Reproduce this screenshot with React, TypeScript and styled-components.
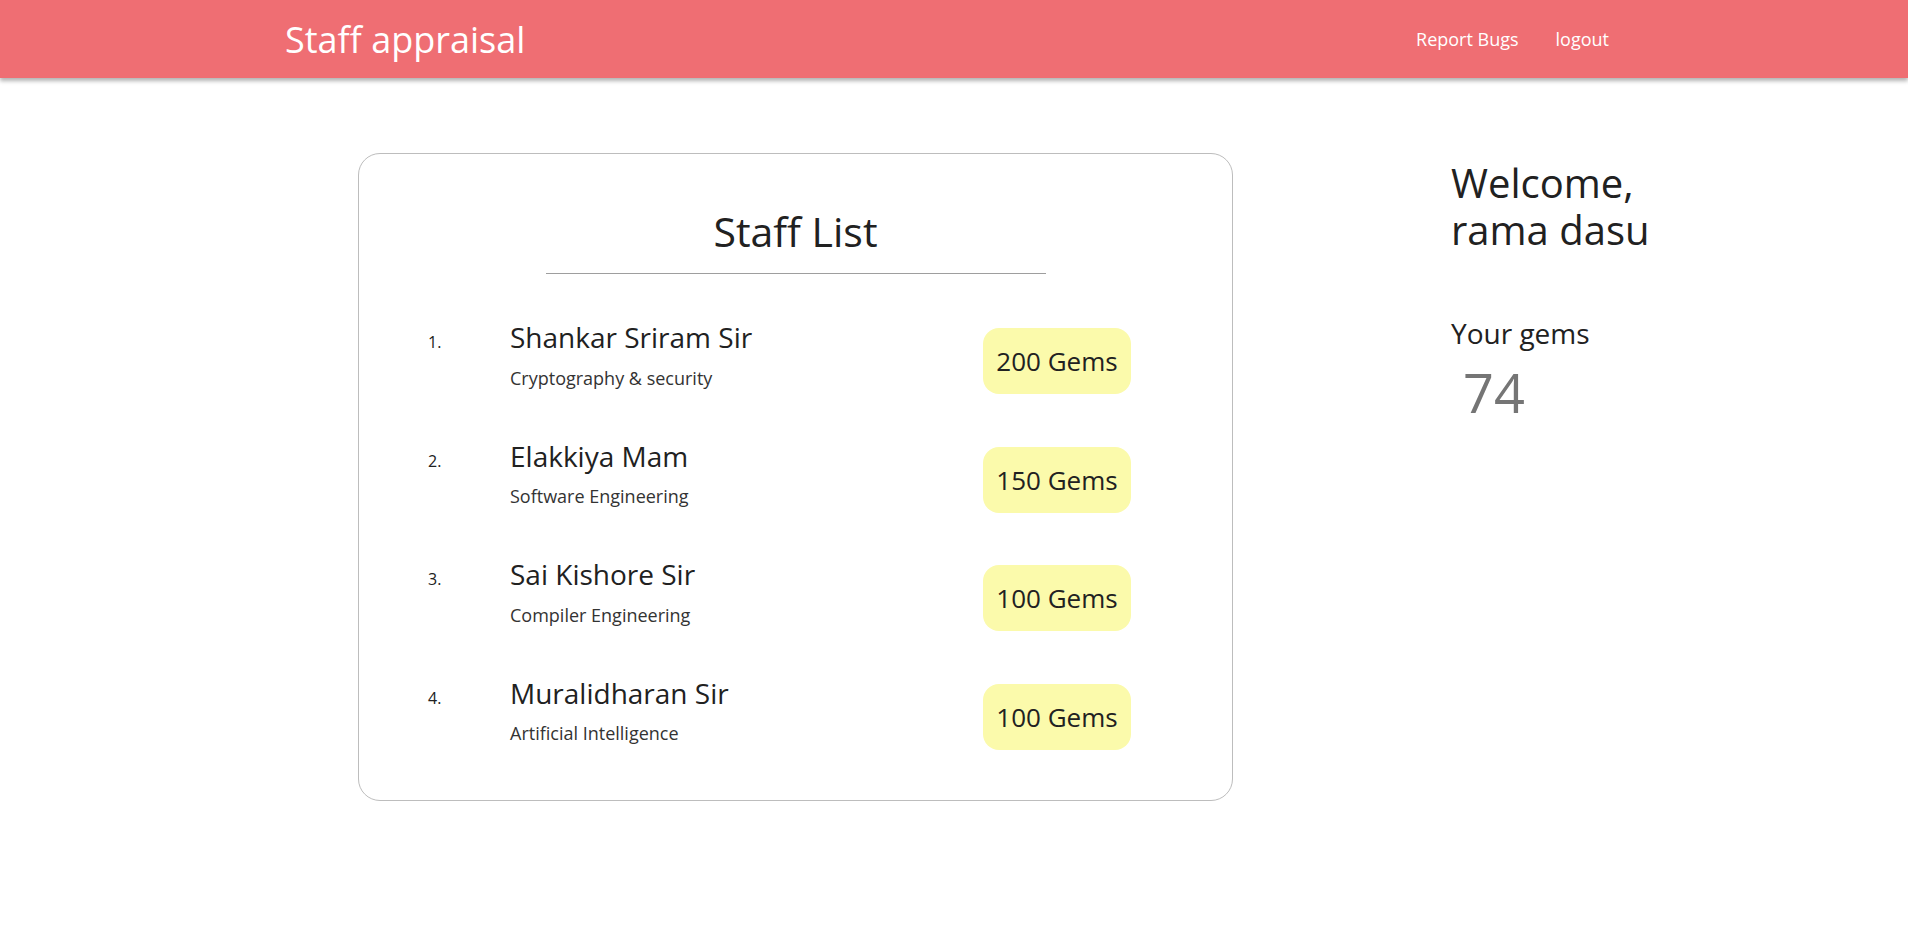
import { createGlobalStyle, styled } from 'styled-components';

const staff = [
  { name: 'Shankar Sriram Sir', subject: 'Cryptography & security', gems: 200 },
  { name: 'Elakkiya Mam', subject: 'Software Engineering', gems: 150 },
  { name: 'Sai Kishore Sir', subject: 'Compiler Engineering', gems: 100 },
  { name: 'Muralidharan Sir', subject: 'Artificial Intelligence', gems: 100 },
];

const GlobalStyle = createGlobalStyle`
  body {
    margin: 0;
    background: #fff;
    font-family: 'Open Sans', 'Noto Sans', sans-serif;
    color: #212121;
  }
`;

function App() {
  return (
    <>
      <GlobalStyle />
      <Navbar>
        <Brand>Staff appraisal</Brand>
        <NavLinks>
          <NavLink>Report Bugs</NavLink>
          <NavLink>logout</NavLink>
        </NavLinks>
      </Navbar>
      <Main>
        <Card>
          <CardTitle>Staff List</CardTitle>
          <StaffList>
            {staff.map((s, i) => (
              <StaffRow key={s.name}>
                <Index>{i + 1}.</Index>
                <Info>
                  <StaffName>{s.name}</StaffName>
                  <Subject>{s.subject}</Subject>
                </Info>
                <GemBadge>{s.gems} Gems</GemBadge>
              </StaffRow>
            ))}
          </StaffList>
        </Card>
        <Sidebar>
          <Welcome>
            Welcome,
            <br />
            rama dasu
          </Welcome>
          <GemsLabel>Your gems</GemsLabel>
          <GemsCount>74</GemsCount>
        </Sidebar>
      </Main>
    </>
  );
}

const Navbar = styled.header`
  height: 78px;
  background-color: #ef6e73;
  box-shadow: 0 3px 4px rgba(0, 0, 0, 0.3);
  display: flex;
  align-items: center;
  justify-content: space-between;
  padding: 0 299px 0 285px;
`;

const Brand = styled.div`
  color: #fff;
  font-size: 36px;
  font-weight: 400;
`;

const NavLinks = styled.nav`
  display: flex;
  gap: 37px;
`;

const NavLink = styled.a`
  color: #fff;
  font-size: 18px;
  font-weight: 400;
  cursor: pointer;
`;

const Main = styled.main`
  display: flex;
  align-items: flex-start;
  gap: 218px;
  padding: 75px 0 0 358px;
`;

const Card = styled.section`
  width: 873px;
  border: 1px solid #bdbdbd;
  border-radius: 22px;
  padding: 53px 0 50px;
`;

const CardTitle = styled.h2`
  margin: 0 auto;
  width: 500px;
  text-align: center;
  font-size: 41px;
  font-weight: 400;
  line-height: 1.2;
  padding-bottom: 17px;
  border-bottom: 1.5px solid #9e9e9e;
`;

const StaffList = styled.ol`
  list-style: none;
  margin: 0;
  padding: 45px 0 0;
  display: flex;
  flex-direction: column;
  gap: 43.5px;
`;

const StaffRow = styled.li`
  display: flex;
  align-items: flex-start;
  padding: 0 101px 0 69px;
`;

const Index = styled.span`
  width: 82px;
  padding-top: 12px;
  font-size: 16px;
`;

const Info = styled.div`
  flex: 1;
  display: flex;
  flex-direction: column;
`;

const StaffName = styled.span`
  font-size: 28px;
  font-weight: 400;
  line-height: 1.3;
`;

const Subject = styled.span`
  margin-top: 10px;
  font-size: 18px;
  color: #333;
`;

const GemBadge = styled.span`
  margin-top: 9px;
  width: 148px;
  height: 66px;
  border-radius: 16px;
  background-color: #fbfaab;
  display: flex;
  align-items: center;
  justify-content: center;
  font-size: 26px;
`;

const Sidebar = styled.aside`
  padding-top: 6px;
`;

const Welcome = styled.h1`
  margin: 0;
  font-size: 40px;
  font-weight: 400;
  line-height: 47px;
`;

const GemsLabel = styled.h3`
  margin: 61px 0 0;
  font-size: 28px;
  font-weight: 400;
`;

const GemsCount = styled.div`
  margin: 3px 0 0 12px;
  font-size: 54px;
  color: #757575;
`;

export default App;
